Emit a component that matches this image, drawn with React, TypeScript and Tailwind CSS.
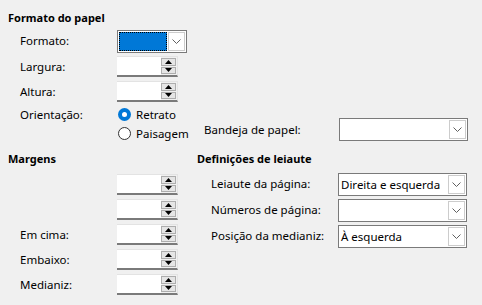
import type { ReactNode } from "react"

function Chevron() {
  return (
    <svg width="9" height="5" viewBox="0 0 9 5" className="block">
      <path d="M0.5 0.5 L4.5 4.5 L8.5 0.5" fill="none" stroke="#606060" strokeWidth="1" />
    </svg>
  )
}

function Combo({ value, width, focused }: { value?: string; width: string; focused?: boolean }) {
  return (
    <div className={`${width} h-[23px] flex border border-[#7a7a7a] bg-white`}>
      {focused ? (
        <div className="flex-1 m-[1px] bg-[#0078d7] outline-1 outline-dotted outline-black -outline-offset-1" />
      ) : (
        <div className="flex-1 pl-[2px] leading-[21px] truncate">{value}</div>
      )}
      <div className="w-[17px] my-[1px] mr-[1px] border border-[#cccccc] flex items-center justify-center">
        <Chevron />
      </div>
    </div>
  )
}

function Arrow({ up }: { up?: boolean }) {
  return (
    <svg width="7" height="4" viewBox="0 0 7 4" className="block">
      <path d={up ? "M0 4 L3.5 0 L7 4 Z" : "M0 0 L3.5 4 L7 0 Z"} fill="#000" />
    </svg>
  )
}

function Spin() {
  return (
    <div className="w-[61px] h-[21px] flex bg-white border-t border-r border-[#e3e3e3] border-b-2 border-b-[#7a7a7a]">
      <div className="flex-1" />
      <div className="w-[16px] flex flex-col gap-[1px] py-[1px] pr-[1px] bg-[#f0f0f0]">
        <div className="flex-1 border border-[#adadad] bg-[#e5e5e5] flex items-center justify-center">
          <Arrow up />
        </div>
        <div className="flex-1 border border-[#adadad] bg-[#e5e5e5] flex items-center justify-center">
          <Arrow />
        </div>
      </div>
    </div>
  )
}

function Row({ label, children, h = "h-[25px]" }: { label?: string; children: ReactNode; h?: string }) {
  return (
    <div className={`${h} flex items-center`}>
      <div className="w-[109px] pl-3">{label}</div>
      {children}
    </div>
  )
}

function Radio({ label, checked }: { label: string; checked?: boolean }) {
  return (
    <div className="h-[19px] flex items-center gap-[5px]">
      {checked ? (
        <div className="w-[13px] h-[13px] rounded-full bg-[#0078d7] flex items-center justify-center">
          <div className="w-[5px] h-[5px] rounded-full bg-white" />
        </div>
      ) : (
        <div className="w-[13px] h-[13px] rounded-full border border-[#333333] bg-white" />
      )}
      <span>{label}</span>
    </div>
  )
}

export default function App() {
  return (
    <div className="w-[482px] h-[305px] bg-[#f0f0f0] text-[11.5px] text-black px-2 pt-[10px] font-['Noto_Sans',sans-serif] leading-4 overflow-hidden">
      <div className="font-bold h-4 text-[11px]">Formato do papel</div>
      <div className="mt-[2px]">
        <Row label="Formato:" h="h-[26px]">
          <Combo width="w-[70px]" focused />
        </Row>
        <Row label="Largura:">
          <Spin />
        </Row>
        <Row label="Altura:">
          <Spin />
        </Row>
        <div className="flex pt-[1px]">
          <div className="w-[109px] pl-3 h-[19px] flex items-center">Orientação:</div>
          <div className="w-[87px] pl-[1px]">
            <Radio label="Retrato" checked />
            <Radio label="Paisagem" />
          </div>
          <div className="mt-[13px] flex items-center h-[23px]">
            <div className="w-[135px]">Bandeja de papel:</div>
            <Combo width="w-[129px]" />
          </div>
        </div>
      </div>

      <div className="mt-[8px] grid grid-cols-[189px_1fr]">
        <div>
          <div className="font-bold h-4 text-[11px]">Margens</div>
          <div className="mt-[5px]">
            <Row>
              <Spin />
            </Row>
            <Row>
              <Spin />
            </Row>
            <Row label="Em cima:">
              <Spin />
            </Row>
            <Row label="Embaixo:">
              <Spin />
            </Row>
            <Row label="Medianiz:">
              <Spin />
            </Row>
          </div>
        </div>
        <div>
          <div className="font-bold h-4 text-[11px]">Definições de leiaute</div>
          <div className="mt-[4px]">
            {[
              ["Leiaute da página:", "Direita e esquerda"],
              ["Números de página:", ""],
              ["Posição da medianiz:", "À esquerda"],
            ].map(([l, v]) => (
              <div key={l} className="h-[26px] flex items-center">
                <div className="w-[141px] pl-[14px]">{l}</div>
                <Combo width="w-[129px]" value={v} />
              </div>
            ))}
          </div>
        </div>
      </div>
    </div>
  )
}
